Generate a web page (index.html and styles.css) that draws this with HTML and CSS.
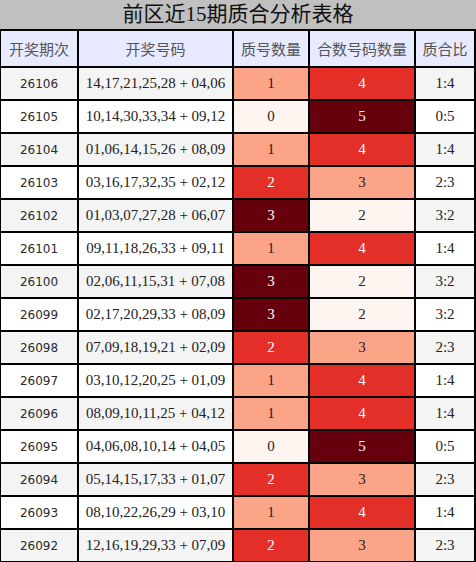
FILE: index.html
```html
<!DOCTYPE html>
<html lang="zh-CN">
<head>
<meta charset="UTF-8">
<meta name="viewport" content="width=device-width, initial-scale=1.0">
<title>前区近15期质合分析表格</title>
<link rel="stylesheet" href="styles.css">
</head>

<body>
<div class="panel">
  <div class="panel-title">前区近15期质合分析表格</div>

  <div class="board">
    <div class="row head">
      <div class="cell">开奖期次</div>
      <div class="cell">开奖号码</div>
      <div class="cell">质号数量</div>
      <div class="cell">合数号码数量</div>
      <div class="cell">质合比</div>
    </div>

    <div class="row odd">
      <div class="cell issue">26106</div>
      <div class="cell">14,17,21,25,28 + 04,06</div>
      <div class="cell lv1">1</div>
      <div class="cell lv2">4</div>
      <div class="cell">1:4</div>
    </div>
    <div class="row">
      <div class="cell issue">26105</div>
      <div class="cell">10,14,30,33,34 + 09,12</div>
      <div class="cell lv0">0</div>
      <div class="cell lv3">5</div>
      <div class="cell">0:5</div>
    </div>
    <div class="row odd">
      <div class="cell issue">26104</div>
      <div class="cell">01,06,14,15,26 + 08,09</div>
      <div class="cell lv1">1</div>
      <div class="cell lv2">4</div>
      <div class="cell">1:4</div>
    </div>
    <div class="row">
      <div class="cell issue">26103</div>
      <div class="cell">03,16,17,32,35 + 02,12</div>
      <div class="cell lv2">2</div>
      <div class="cell lv1">3</div>
      <div class="cell">2:3</div>
    </div>
    <div class="row odd">
      <div class="cell issue">26102</div>
      <div class="cell">01,03,07,27,28 + 06,07</div>
      <div class="cell lv3">3</div>
      <div class="cell lv0">2</div>
      <div class="cell">3:2</div>
    </div>
    <div class="row">
      <div class="cell issue">26101</div>
      <div class="cell">09,11,18,26,33 + 09,11</div>
      <div class="cell lv1">1</div>
      <div class="cell lv2">4</div>
      <div class="cell">1:4</div>
    </div>
    <div class="row odd">
      <div class="cell issue">26100</div>
      <div class="cell">02,06,11,15,31 + 07,08</div>
      <div class="cell lv3">3</div>
      <div class="cell lv0">2</div>
      <div class="cell">3:2</div>
    </div>
    <div class="row">
      <div class="cell issue">26099</div>
      <div class="cell">02,17,20,29,33 + 08,09</div>
      <div class="cell lv3">3</div>
      <div class="cell lv0">2</div>
      <div class="cell">3:2</div>
    </div>
    <div class="row odd">
      <div class="cell issue">26098</div>
      <div class="cell">07,09,18,19,21 + 02,09</div>
      <div class="cell lv2">2</div>
      <div class="cell lv1">3</div>
      <div class="cell">2:3</div>
    </div>
    <div class="row">
      <div class="cell issue">26097</div>
      <div class="cell">03,10,12,20,25 + 01,09</div>
      <div class="cell lv1">1</div>
      <div class="cell lv2">4</div>
      <div class="cell">1:4</div>
    </div>
    <div class="row odd">
      <div class="cell issue">26096</div>
      <div class="cell">08,09,10,11,25 + 04,12</div>
      <div class="cell lv1">1</div>
      <div class="cell lv2">4</div>
      <div class="cell">1:4</div>
    </div>
    <div class="row">
      <div class="cell issue">26095</div>
      <div class="cell">04,06,08,10,14 + 04,05</div>
      <div class="cell lv0">0</div>
      <div class="cell lv3">5</div>
      <div class="cell">0:5</div>
    </div>
    <div class="row odd">
      <div class="cell issue">26094</div>
      <div class="cell">05,14,15,17,33 + 01,07</div>
      <div class="cell lv2">2</div>
      <div class="cell lv1">3</div>
      <div class="cell">2:3</div>
    </div>
    <div class="row">
      <div class="cell issue">26093</div>
      <div class="cell">08,10,22,26,29 + 03,10</div>
      <div class="cell lv1">1</div>
      <div class="cell lv2">4</div>
      <div class="cell">1:4</div>
    </div>
    <div class="row odd">
      <div class="cell issue">26092</div>
      <div class="cell">12,16,19,29,33 + 07,09</div>
      <div class="cell lv2">2</div>
      <div class="cell lv1">3</div>
      <div class="cell">2:3</div>
    </div>
  </div>
</div>
</body>
</html>
```

FILE: styles.css
```css
/* 质合分析表 */
body {
  margin: 0;
  background: #fff;
  font-family: "Liberation Serif", "Noto Sans CJK SC", serif;
  color: #222;
}

.panel {
  width: 476px;
}

.panel-title {
  height: 29px;
  line-height: 29px;
  background: #c0c0c0;
  color: #111;
  text-align: center;
  font-size: 21px;
}

.board {
  display: grid;
  gap: 2px;
  background: #000;
  padding: 2px 2px 2px 1px;
}

.row {
  display: grid;
  grid-template-columns: 76px 153px 74px 104px 58px;
  gap: 2px;
  height: 31px;
}

.cell {
  display: flex;
  align-items: center;
  justify-content: center;
  background: #fff;
  font-size: 15px;
  white-space: nowrap;
}

.row.odd .cell {
  background: #f4f4f4;
}

.row.head {
  height: 35px;
}

.row.head .cell {
  background: #e8eaff;
  color: #555;
  font-family: "Noto Sans CJK SC", sans-serif;
  font-size: 15px;
}

.cell.issue {
  font-family: "DejaVu Sans", sans-serif;
  font-size: 12px;
  color: #2a2a2a;
}

/* heat levels */
.row .cell.lv0 { background: #fff5f0; color: #222; }
.row .cell.lv1 { background: #fca487; color: #222; }
.row .cell.lv2 { background: #e32f28; color: #fff; }
.row .cell.lv3 { background: #67000d; color: #fff; }
```
